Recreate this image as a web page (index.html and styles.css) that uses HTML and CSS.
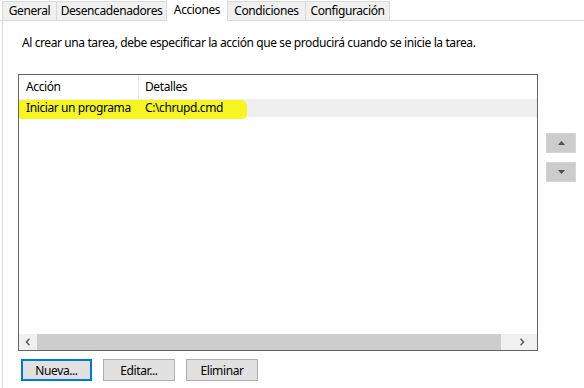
FILE: index.html
```html
<!DOCTYPE html>
<html lang="es">
<head>
  <meta charset="UTF-8">
  <title>Acciones</title>
  <link rel="stylesheet" href="styles.css">
</head>
<body>
  <div class="tabs">
    <div class="tab first t-general">General</div>
    <div class="tab t-desenc">Desencadenadores</div>
    <div class="tab active t-acciones">Acciones</div>
    <div class="tab t-cond">Condiciones</div>
    <div class="tab t-config">Configuración</div>
  </div>
  <div class="panel">
    <p class="intro">Al crear una tarea, debe especificar la acción que se producirá cuando se inicie la tarea.</p>

    <div class="main-row">
      <div class="list">
        <div class="list-head">
          <div class="col col-accion">Acción</div>
          <div class="col col-detalles">Detalles</div>
        </div>
        <div class="list-body">
          <div class="list-row">
            <span class="marker"></span>
            <div class="col col-accion">Iniciar un programa</div>
            <div class="col col-detalles">C:\chrupd.cmd</div>
          </div>
        </div>
        <div class="hscroll">
          <span class="arrow-btn">
            <svg width="6" height="8" viewBox="0 0 6 8"><path d="M4.5 0.8 L1.5 4 L4.5 7.2" fill="none" stroke="#606060" stroke-width="1.6"/></svg>
          </span>
          <span class="thumb"></span>
          <span class="arrow-btn right">
            <svg width="6" height="8" viewBox="0 0 6 8"><path d="M1.5 0.8 L4.5 4 L1.5 7.2" fill="none" stroke="#606060" stroke-width="1.6"/></svg>
          </span>
        </div>
      </div>

      <div class="side">
        <button class="move">
          <svg width="7" height="4" viewBox="0 0 7 4"><path d="M0 4 L3.5 0 L7 4 Z" fill="#505050"/></svg>
        </button>
        <button class="move">
          <svg width="7" height="4" viewBox="0 0 7 4"><path d="M0 0 L3.5 4 L7 0 Z" fill="#505050"/></svg>
        </button>
      </div>
    </div>

    <div class="buttons">
      <button class="btn default">Nueva...</button>
      <button class="btn">Editar...</button>
      <button class="btn">Eliminar</button>
    </div>
  </div>
</body>
</html>
```

FILE: styles.css
```css
/* Base */
* {
  margin: 0;
  padding: 0;
  box-sizing: border-box;
}

body {
  font-family: "Noto Sans", "Open Sans", sans-serif;
  font-size: 12px;
  letter-spacing: -0.4px;
  color: #000;
  background: #fff;
  width: 584px;
  height: 388px;
  overflow: hidden;
}

/* Pestañas */
.tabs {
  display: flex;
  align-items: flex-end;
  height: 21px;
  padding-left: 2px;
  border-bottom: 1px solid #d9d9d9;
}

.tab {
  height: 19px;
  line-height: 18px;
  text-align: center;
  background: #f0f0f0;
  border: 1px solid #d9d9d9;
  border-bottom: none;
  margin-left: -1px;
  white-space: nowrap;
}

.tab.first {
  margin-left: 0;
}

.t-general { width: 55px; }
.t-desenc { width: 111px; }
.t-acciones { width: 62px; }
.t-cond { width: 79px; }
.t-config { width: 85px; }

.tab.active {
  height: 22px;
  line-height: 19px;
  margin-bottom: -1px;
  background: #fff;
  position: relative;
}

/* Panel */
.panel {
  margin-left: 2px;
  border-left: 1px solid #d9d9d9;
  height: 367px;
  padding: 15px 0 0 15px;
}

.intro {
  padding-left: 4px;
  line-height: 14px;
}

.main-row {
  display: flex;
  margin-top: 24px;
}

/* Lista */
.list {
  width: 520px;
  height: 277px;
  border: 1px solid #646464;
  display: flex;
  flex-direction: column;
}

.list-head {
  display: flex;
  height: 24px;
  line-height: 23px;
  flex-shrink: 0;
}

.list-head .col-accion {
  border-right: 1px solid #e5e5e5;
}

.col {
  white-space: nowrap;
}

.col-accion {
  width: 120px;
  padding-left: 7px;
}

.col-detalles {
  padding-left: 6px;
}

.list-body {
  flex: 1;
}

.list-row {
  display: flex;
  height: 18px;
  line-height: 18px;
  background: #efefef;
  position: relative;
}

.list-row .col {
  position: relative;
}

.marker {
  position: absolute;
  left: 0;
  top: 1px;
  width: 228px;
  height: 19px;
  background: #f6f522;
  border-radius: 2px 6px 5px 2px;
}

.hscroll {
  display: flex;
  height: 16px;
  flex-shrink: 0;
  background: #f0f0f0;
}

.arrow-btn {
  width: 18px;
  display: flex;
  align-items: center;
  justify-content: center;
}

.arrow-btn.right {
  width: 36px;
  padding-left: 6px;
}

.thumb {
  flex: 1;
  background: #cdcdcd;
}

/* Botones laterales */
.side {
  display: flex;
  flex-direction: column;
  gap: 9px;
  margin-left: 8px;
  padding-top: 59px;
}

.move {
  width: 30px;
  height: 20px;
  background: #cccccc;
  border: 1px solid #d4d4d4;
  display: flex;
  align-items: center;
  justify-content: center;
}

/* Botones inferiores */
.buttons {
  display: flex;
  gap: 11px;
  margin-top: 8px;
  padding-left: 3px;
}

.btn {
  width: 72px;
  height: 22px;
  font-family: inherit;
  font-size: 12px;
  letter-spacing: -0.4px;
  background: #e1e1e1;
  border: 1px solid #adadad;
  color: #000;
}

.btn.default {
  width: 71px;
  border: 2px solid #0078d7;
}
```
